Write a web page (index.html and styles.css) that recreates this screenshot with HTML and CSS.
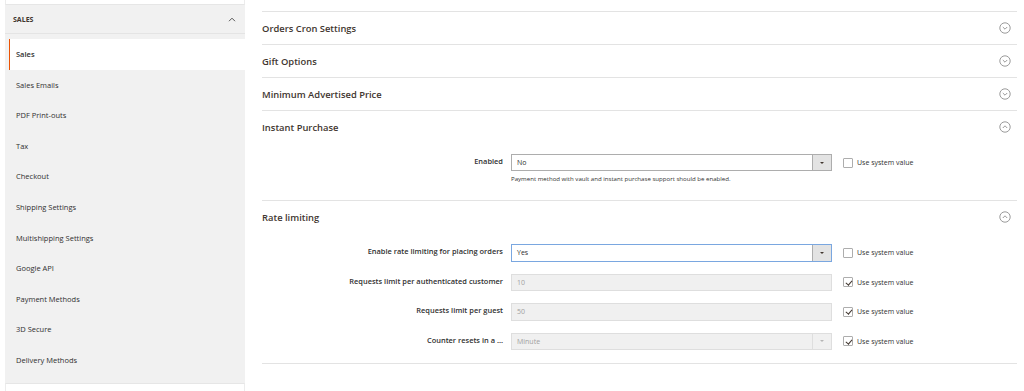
FILE: index.html
```html
<!DOCTYPE html>
<html lang="en">
  <head>
    <meta charset="UTF-8" />
    <meta name="viewport" content="width=device-width, initial-scale=1.0"/>
    <title>Configuration - Sales</title>
    <link rel="stylesheet" href="styles.css">
  </head>
  <body>
    <div class="page">
      <aside class="side">
        <div class="side-top"></div>
        <div class="side-title">
          <span>Sales</span>
          <svg class="caret" width="8" height="5" viewBox="0 0 8 5"><path d="M1 4.2 L4 1.2 L7 4.2" fill="none" stroke="#555" stroke-width="1"/></svg>
        </div>
        <ul class="side-nav">
          <li class="nav-item active">Sales</li>
          <li class="nav-item">Sales Emails</li>
          <li class="nav-item">PDF Print-outs</li>
          <li class="nav-item">Tax</li>
          <li class="nav-item">Checkout</li>
          <li class="nav-item">Shipping Settings</li>
          <li class="nav-item">Multishipping Settings</li>
          <li class="nav-item">Google API</li>
          <li class="nav-item">Payment Methods</li>
          <li class="nav-item">3D Secure</li>
          <li class="nav-item">Delivery Methods</li>
        </ul>
        <div class="side-bottom"></div>
      </aside>

      <main class="content">
        <div class="prev-tail"></div>

        <section class="group">
          <div class="group-head">
            <span>Orders Cron Settings</span>
            <svg class="toggle" width="12" height="12" viewBox="0 0 12 12"><circle cx="6" cy="6" r="5.2" fill="none" stroke="#8f8f8f" stroke-width="0.9"/><path d="M3.8 5 L6 7.2 L8.2 5" fill="none" stroke="#8f8f8f" stroke-width="0.9"/></svg>
          </div>
        </section>

        <section class="group">
          <div class="group-head">
            <span>Gift Options</span>
            <svg class="toggle" width="12" height="12" viewBox="0 0 12 12"><circle cx="6" cy="6" r="5.2" fill="none" stroke="#8f8f8f" stroke-width="0.9"/><path d="M3.8 5 L6 7.2 L8.2 5" fill="none" stroke="#8f8f8f" stroke-width="0.9"/></svg>
          </div>
        </section>

        <section class="group">
          <div class="group-head">
            <span>Minimum Advertised Price</span>
            <svg class="toggle" width="12" height="12" viewBox="0 0 12 12"><circle cx="6" cy="6" r="5.2" fill="none" stroke="#8f8f8f" stroke-width="0.9"/><path d="M3.8 5 L6 7.2 L8.2 5" fill="none" stroke="#8f8f8f" stroke-width="0.9"/></svg>
          </div>
        </section>

        <section class="group open">
          <div class="group-head">
            <span>Instant Purchase</span>
            <svg class="toggle" width="12" height="12" viewBox="0 0 12 12"><circle cx="6" cy="6" r="5.2" fill="none" stroke="#8f8f8f" stroke-width="0.9"/><path d="M3.8 7 L6 4.8 L8.2 7" fill="none" stroke="#8f8f8f" stroke-width="0.9"/></svg>
          </div>
          <div class="group-body first-pad">
            <div class="row">
              <label class="row-label">Enabled</label>
              <div class="row-control">
                <div class="select">
                  <span>No</span>
                  <span class="select-arrow"><i></i></span>
                </div>
                <p class="note">Payment method with vault and instant purchase support should be enabled.</p>
              </div>
              <div class="row-use">
                <span class="check"></span>
                <span>Use system value</span>
              </div>
            </div>
          </div>
        </section>

        <section class="group open">
          <div class="group-head">
            <span>Rate limiting</span>
            <svg class="toggle" width="12" height="12" viewBox="0 0 12 12"><circle cx="6" cy="6" r="5.2" fill="none" stroke="#8f8f8f" stroke-width="0.9"/><path d="M3.8 7 L6 4.8 L8.2 7" fill="none" stroke="#8f8f8f" stroke-width="0.9"/></svg>
          </div>
          <div class="group-body">
            <div class="row">
              <label class="row-label">Enable rate limiting for placing orders</label>
              <div class="row-control">
                <div class="select focus">
                  <span>Yes</span>
                  <span class="select-arrow"><i></i></span>
                </div>
              </div>
              <div class="row-use">
                <span class="check"></span>
                <span>Use system value</span>
              </div>
            </div>
            <div class="row">
              <label class="row-label">Requests limit per authenticated customer</label>
              <div class="row-control">
                <div class="input disabled">10</div>
              </div>
              <div class="row-use">
                <span class="check checked"></span>
                <span>Use system value</span>
              </div>
            </div>
            <div class="row">
              <label class="row-label">Requests limit per guest</label>
              <div class="row-control">
                <div class="input disabled">50</div>
              </div>
              <div class="row-use">
                <span class="check checked"></span>
                <span>Use system value</span>
              </div>
            </div>
            <div class="row">
              <label class="row-label">Counter resets in a ...</label>
              <div class="row-control">
                <div class="select disabled">
                  <span>Minute</span>
                  <span class="select-arrow"><i></i></span>
                </div>
              </div>
              <div class="row-use">
                <span class="check checked"></span>
                <span>Use system value</span>
              </div>
            </div>
          </div>
        </section>
      </main>
    </div>
  </body>
</html>
```

FILE: styles.css
```css
body {
  margin: 0;
  font-family: 'Open Sans', 'Noto Sans', sans-serif;
  color: #303030;
  background: #fff;
  height: 391px;
  overflow: hidden;
}

.page {
  display: flex;
  align-items: flex-start;
}

/* sidebar */
.side {
  width: 240px;
  margin-left: 5px;
  flex-shrink: 0;
}

.side-top {
  height: 4px;
  border-left: 1px solid #ececec;
  border-right: 1px solid #ececec;
  border-bottom: 1px solid #e6e6e6;
}

.side-title {
  display: flex;
  justify-content: space-between;
  align-items: center;
  height: 28px;
  padding: 0 9px 0 8px;
  background: #f1f1f1;
  border-bottom: 1px solid #e4e4e4;
  font-size: 7px;
  font-weight: 700;
  text-transform: uppercase;
  color: #41362f;
}

.side-nav {
  list-style: none;
  margin: 0;
  padding: 5px 0 7px;
  background: #f1f1f1;
}

.nav-item {
  height: 30.6px;
  line-height: 31.5px;
  padding-left: 11px;
  font-size: 7.5px;
  color: #303030;
}

.nav-item.active {
  margin-left: 4px;
  padding-left: 6px;
  background: #fff;
  border-left: 1px solid #eb5202;
  font-weight: 600;
}

.side-bottom {
  height: 10px;
  border-left: 1px solid #ececec;
  border-right: 1px solid #ececec;
  border-top: 1px solid #e6e6e6;
}

/* main */
.content {
  width: 755px;
  margin-left: 17px;
}

.prev-tail {
  height: 11px;
}

.group {
  border-top: 1px solid #e3e3e3;
}

.group:last-child {
  border-bottom: 1px solid #e3e3e3;
}

.group-head {
  display: flex;
  justify-content: space-between;
  align-items: center;
  height: 32px;
  font-size: 9.4px;
  font-weight: 600;
  color: #41362f;
}

.toggle {
  margin-right: 6px;
}

.group-body {
  padding: 11px 0 13px;
}

.group-body.first-pad {
  padding: 11px 0 17px;
}

.row {
  display: grid;
  grid-template-columns: 241px 329px auto;
  align-items: start;
  margin-bottom: 12.2px;
}

.row:last-child {
  margin-bottom: 0;
}

.row-label {
  padding-top: 2px;
  text-align: right;
  font-size: 7.45px;
  font-weight: 600;
  color: #303030;
}

.row-control {
  margin-left: 8px;
}

.select,
.input {
  display: flex;
  align-items: center;
  justify-content: space-between;
  box-sizing: border-box;
  height: 17.3px;
  padding-left: 5px;
  border: 1px solid #adadad;
  background: #fff;
  font-size: 7px;
  color: #303030;
}

.select.focus {
  border-color: #7aa7e0;
}

.select-arrow {
  display: flex;
  align-items: center;
  justify-content: center;
  width: 18px;
  height: 100%;
  background: #e3e3e3;
  border-left: 1px solid #adadad;
}

.select-arrow i {
  width: 0;
  height: 0;
  border-left: 2px solid transparent;
  border-right: 2px solid transparent;
  border-top: 2.5px solid #41362f;
}

.disabled {
  background: #f0f0f0;
  border-color: #dedede;
  color: #a0a0a0;
}

.disabled .select-arrow {
  background: #f0f0f0;
  border-left-color: #dedede;
}

.disabled .select-arrow i {
  border-top-color: #b5b5b5;
}

.note {
  margin: 3px 0 0;
  font-size: 6.1px;
  color: #303030;
}

.row-use {
  display: flex;
  align-items: center;
  gap: 4px;
  height: 17px;
  margin-left: 11px;
  font-size: 7px;
  color: #303030;
}

.check {
  position: relative;
  box-sizing: border-box;
  width: 10px;
  height: 10px;
  border: 1px solid #adadad;
  border-radius: 1px;
  background: #fff;
}

.check.checked::after {
  content: "";
  position: absolute;
  left: 2.5px;
  top: 0.5px;
  width: 2.5px;
  height: 5px;
  border-right: 1px solid #41362f;
  border-bottom: 1px solid #41362f;
  transform: rotate(40deg);
}
```
